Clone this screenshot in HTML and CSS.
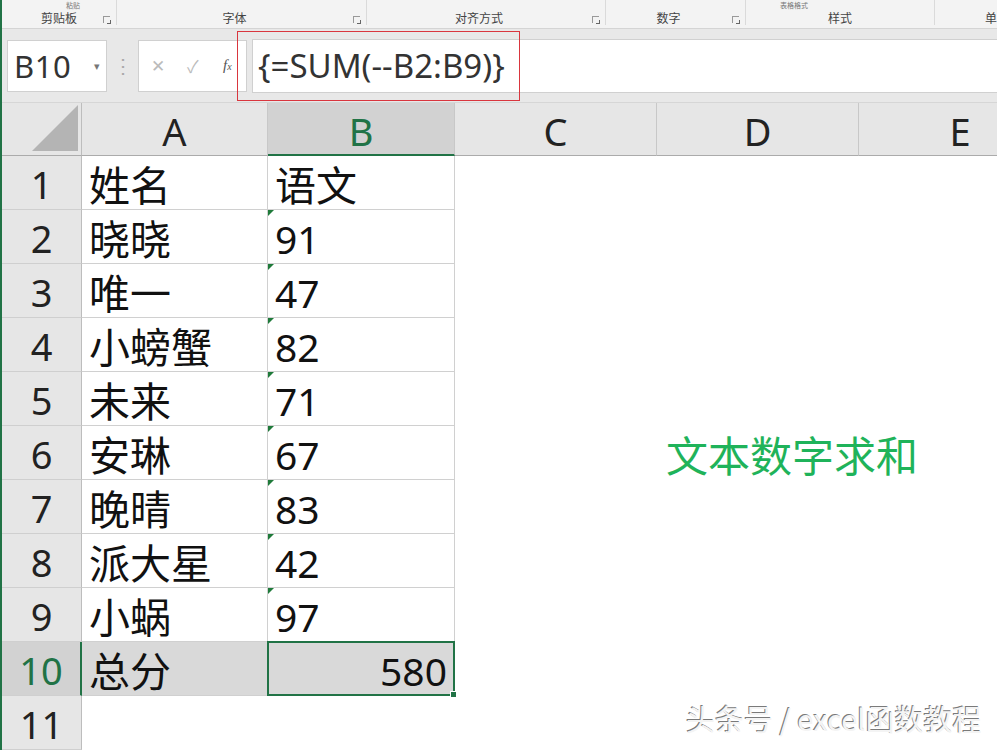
FILE: index.html
```html
<!DOCTYPE html>
<html lang="zh-CN">
<head>
<meta charset="UTF-8">
<title>文本数字求和</title>
<link rel="stylesheet" href="styles.css">
</head>
<body>
<div class="window">
  <div class="ribbon">
    <div class="group g-clip"><span class="cut cut-paste">粘贴</span><span class="label">剪贴板</span><span class="launch"></span></div>
    <div class="group g-font"><span class="label">字体</span><span class="launch"></span></div>
    <div class="group g-align"><span class="label">对齐方式</span><span class="launch"></span></div>
    <div class="group g-num"><span class="label">数字</span><span class="launch"></span></div>
    <div class="group g-style"><span class="cut cut-table">表格格式</span><span class="label">样式</span></div>
    <div class="group g-cell"><span class="label">单</span></div>
  </div>

  <div class="formula-bar">
    <div class="name-box"><span class="name">B10</span><span class="arrow">&#9662;</span></div>
    <div class="dots">&#8942;</div>
    <div class="btn-box">
      <span class="fb-btn">&#10005;</span>
      <span class="fb-btn">&#10003;</span>
      <span class="fx"><i>f</i><small>x</small></span>
    </div>
    <div class="formula"><span class="formula-text">{=SUM(--B2:B9)}</span></div>
    <div class="mark"></div>
  </div>

  <div class="sheet">
    <div class="corner"><span class="tri"></span></div>
    <div class="col-head">A</div>
    <div class="col-head active">B</div>
    <div class="col-head">C</div>
    <div class="col-head">D</div>
    <div class="col-head last">E</div>

    <div class="row-head">1</div><div class="cell txt">姓名</div><div class="cell txt">语文</div><div class="cell empty"></div><div class="cell empty"></div><div class="cell empty"></div>
    <div class="row-head">2</div><div class="cell txt">晓晓</div><div class="cell num">91</div><div class="cell empty"></div><div class="cell empty"></div><div class="cell empty"></div>
    <div class="row-head">3</div><div class="cell txt">唯一</div><div class="cell num">47</div><div class="cell empty"></div><div class="cell empty"></div><div class="cell empty"></div>
    <div class="row-head">4</div><div class="cell txt">小螃蟹</div><div class="cell num">82</div><div class="cell empty"></div><div class="cell empty"></div><div class="cell empty"></div>
    <div class="row-head">5</div><div class="cell txt">未来</div><div class="cell num">71</div><div class="cell empty"></div><div class="cell empty"></div><div class="cell empty"></div>
    <div class="row-head">6</div><div class="cell txt">安琳</div><div class="cell num">67</div><div class="cell empty"></div><div class="cell empty"></div><div class="cell empty"></div>
    <div class="row-head">7</div><div class="cell txt">晚晴</div><div class="cell num">83</div><div class="cell empty"></div><div class="cell empty"></div><div class="cell empty"></div>
    <div class="row-head">8</div><div class="cell txt">派大星</div><div class="cell num">42</div><div class="cell empty"></div><div class="cell empty"></div><div class="cell empty"></div>
    <div class="row-head">9</div><div class="cell txt">小蜗</div><div class="cell num">97</div><div class="cell empty"></div><div class="cell empty"></div><div class="cell empty"></div>
    <div class="row-head active">10</div><div class="cell txt filled">总分</div><div class="cell filled selected">580<span class="handle"></span></div><div class="cell empty"></div><div class="cell empty"></div><div class="cell empty"></div>
    <div class="row-head">11</div><div class="cell blank"></div><div class="cell blank"></div><div class="cell blank"></div><div class="cell blank"></div><div class="cell blank"></div>

    <div class="title">文本数字求和</div>
    <div class="watermark">头条号 / excel函数教程</div>
  </div>
</div>
</body>
</html>
```

FILE: styles.css
```css
body {
  margin: 0;
  overflow: hidden;
  font-family: "Noto Sans", "Noto Sans CJK SC", sans-serif;
  background: #fff;
}

.window {
  width: 997px;
  height: 750px;
  border-left: 2px solid #217346;
  box-sizing: border-box;
  overflow: hidden;
}

/* ribbon strip, only bottom labels visible */
.ribbon {
  display: flex;
  height: 28px;
  background: #f3f3f3;
  border-bottom: 1px solid #d4d4d4;
  overflow: hidden;
}
.group {
  position: relative;
  border-right: 1px solid #dadada;
  height: 25px;
  box-sizing: border-box;
  text-align: center;
  font-family: "Noto Sans CJK SC", sans-serif;
  font-size: 12px;
  color: #444;
}
.group .label {
  display: block;
  padding-top: 11px;
  line-height: 14px;
}
.g-clip { width: 115px; }
.g-font { width: 250px; padding-right: 14px; }
.g-align { width: 239px; padding-right: 14px; }
.g-num { width: 140px; padding-right: 14px; }
.g-style { width: 189px; }
.g-cell { flex: 1; border-right: none; text-align: right; }
.launch {
  position: absolute;
  right: 6px;
  bottom: 2px;
  width: 6px;
  height: 6px;
  border-left: 1px solid #999;
  border-top: 1px solid #999;
}
.launch::after {
  content: "";
  position: absolute;
  right: -1px;
  bottom: -1px;
  width: 3px;
  height: 3px;
  border-right: 1px solid #666;
  border-bottom: 1px solid #666;
}
.cut {
  position: absolute;
  top: 1px;
  font-size: 7px;
  line-height: 9px;
  color: #777;
}
.cut-paste { left: 64px; }
.cut-table { left: 34px; }

/* formula bar */
.formula-bar {
  position: relative;
  display: flex;
  align-items: center;
  height: 73px;
  background: #e8e8e8;
  padding-left: 5px;
}
.name-box {
  display: flex;
  align-items: center;
  justify-content: space-between;
  width: 100px;
  height: 52px;
  box-sizing: border-box;
  background: #fff;
  border: 1px solid #d0d0d0;
  padding: 0 6px;
}
.name {
  font-size: 31px;
  color: #333;
  letter-spacing: 0.5px;
}
.arrow {
  font-size: 11px;
  color: #777;
}
.dots {
  width: 31px;
  text-align: center;
  color: #aaa;
  font-size: 20px;
}
.btn-box {
  display: flex;
  align-items: center;
  width: 109px;
  height: 52px;
  box-sizing: border-box;
  background: #fff;
  border: 1px solid #d0d0d0;
  padding-left: 12px;
}
.fb-btn {
  width: 36px;
  color: #bbb;
  font-size: 17px;
}
.fx {
  font-family: "Liberation Serif", serif;
  color: #555;
  font-size: 15px;
}
.fx small { font-size: 10px; font-style: italic; }
.formula {
  flex: 1;
  height: 52px;
  margin-left: 5px;
  background: #fff;
  border: 1px solid #d0d0d0;
  border-right: none;
  display: flex;
  align-items: center;
  padding-left: 5px;
}
.formula-text {
  font-size: 33px;
  color: #333;
}
.mark {
  position: absolute;
  left: 235px;
  top: 2px;
  width: 281px;
  height: 68px;
  border: 1px solid #d9363e;
}

/* grid */
.sheet {
  position: relative;
  display: grid;
  grid-template-columns: 80px 186px 187px 202px 202px 202px;
  grid-template-rows: 53px repeat(11, 54px);
  border-top: 1px solid #d6d6d6;
}
.corner {
  position: relative;
  background: #e6e6e6;
  border-right: 1px solid #bdbdbd;
  border-bottom: 1px solid #ababab;
}
.tri {
  position: absolute;
  right: 3px;
  bottom: 4px;
  width: 0;
  height: 0;
  border-left: 46px solid transparent;
  border-bottom: 46px solid #b4b4b4;
}
.col-head {
  background: #e6e6e6;
  border-right: 1px solid #c8c8c8;
  border-bottom: 1px solid #ababab;
  text-align: center;
  font-size: 38px;
  line-height: 56px;
  color: #222;
}
.col-head.last { border-right: none; }
.col-head.active {
  background: #d2d2d2;
  color: #217346;
  border-bottom: 2px solid #217346;
}
.row-head {
  background: #e6e6e6;
  border-right: 1px solid #bdbdbd;
  border-bottom: 1px solid #cfcfcf;
  text-align: center;
  font-size: 38px;
  line-height: 56px;
  color: #222;
}
.row-head.active {
  background: #d2d2d2;
  color: #217346;
  border-right: 2px solid #217346;
}
.cell {
  position: relative;
  border-right: 1px solid #d0d0d0;
  border-bottom: 1px solid #d0d0d0;
  font-size: 39px;
  line-height: 58px;
  padding-left: 7px;
  color: #111;
}
.cell.txt {
  font-size: 41px;
  line-height: 58px;
}
.cell.empty { border: none; }
.cell.blank { border: none; }
.cell.num::before {
  content: "";
  position: absolute;
  left: 0;
  top: 0;
  border-top: 6px solid #1f7a3a;
  border-right: 6px solid transparent;
}
.cell.filled { background: #d9d9d9; }
.cell.selected {
  text-align: right;
  padding-right: 6px;
  border: 2px solid #217346;
  margin: -1px 0 0 -1px;
  line-height: 56px;
}
.handle {
  position: absolute;
  right: -4px;
  bottom: -4px;
  width: 5px;
  height: 5px;
  background: #217346;
  border: 1px solid #fff;
}
.title {
  position: absolute;
  left: 664px;
  top: 320px;
  font-family: "Noto Sans CJK SC", sans-serif;
  font-size: 42px;
  color: #1fb35a;
}
.watermark {
  position: absolute;
  left: 684px;
  top: 594px;
  font-family: "Noto Sans CJK SC", sans-serif;
  font-size: 29px;
  color: #f4f4f4;
  text-shadow: -1px -1px 0 #7a7a7a, 1px 1px 0 #fff;
}
```
